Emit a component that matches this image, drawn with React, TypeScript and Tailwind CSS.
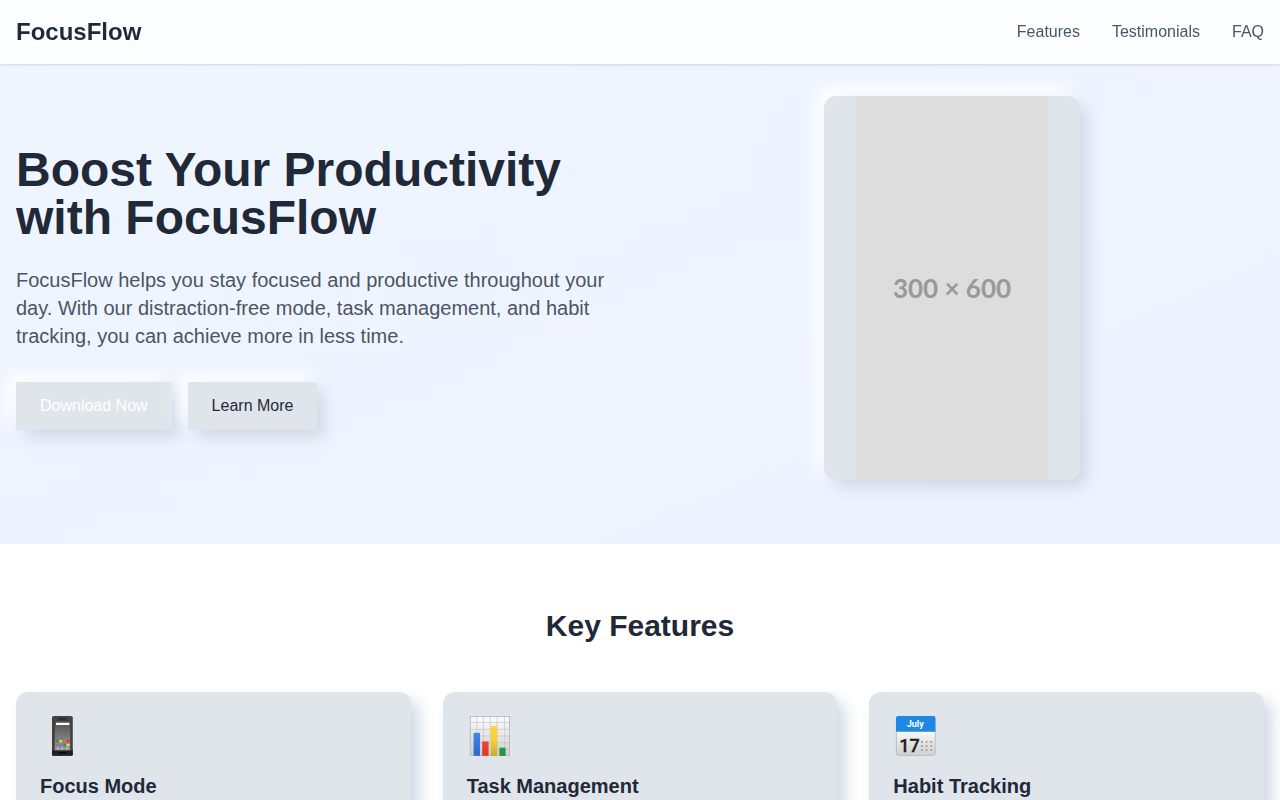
import type { ReactNode } from "react";

const raised = "bg-[#e0e5ec] shadow-[8px_8px_16px_#d1d9e6,-8px_-8px_16px_#ffffff]";

function PhoneIcon() {
  const apps: [number, number, string][] = [
    [16, 24, "#0f9d58"],
    [19.4, 24, "#fdd835"],
    [23.2, 24, "#ff6d00"],
    [26.8, 24, "#e53935"],
    [16, 27.8, "#ef5350"],
    [19.4, 27.8, "#4285f4"],
    [23.2, 27.8, "#0f9d58"],
    [26.8, 27.8, "#fdd835"],
  ];
  return (
    <svg viewBox="0 0 45 40" className="h-10 w-[45px]" aria-hidden="true">
      <defs>
        <linearGradient id="phone-screen" x1="0" y1="0" x2="0" y2="1">
          <stop offset="0" stopColor="#505050" />
          <stop offset="1" stopColor="#9a9a9a" />
        </linearGradient>
      </defs>
      <rect x="12" y="0" width="20.8" height="39.8" rx="1.6" fill="#424242" />
      <path d="M12 34.3h20.8v3.9a1.6 1.6 0 0 1-1.6 1.6H13.6a1.6 1.6 0 0 1-1.6-1.6z" fill="#212121" />
      <rect x="14.3" y="4.7" width="16.3" height="29.8" fill="url(#phone-screen)" stroke="#303030" strokeWidth=".5" />
      <rect x="18.6" y="2" width="7.8" height="1.6" rx=".8" fill="#262626" />
      <rect x="16" y="6.8" width="13.4" height="2.2" fill="#fff" />
      {apps.map(([x, y, fill]) => (
        <rect key={`${x}-${y}`} x={x} y={y} width="2.6" height="2.4" rx=".4" fill={fill} />
      ))}
      <path d="M17.2 31.6h1.6v2h-1.6zM21.6 31.6h1.6v2h-1.6zM26.4 31.6H28v2h-1.6z" fill="#c4c4c4" />
      <rect x="18.6" y="35.9" width="7.8" height="1.4" rx=".7" fill="#050505" />
    </svg>
  );
}

function ChartIcon() {
  return (
    <svg viewBox="0 0 45 40" className="h-10 w-[45px]" aria-hidden="true">
      <defs>
        <linearGradient id="chart-paper" x1="0" y1="0" x2="0" y2="1">
          <stop offset="0" stopColor="#fcfcfc" />
          <stop offset="1" stopColor="#d0d0d0" />
        </linearGradient>
        <linearGradient id="chart-blue" x1="0" y1="0" x2="0" y2="1">
          <stop offset="0" stopColor="#4285f4" />
          <stop offset="1" stopColor="#3566c4" />
        </linearGradient>
        <linearGradient id="chart-red" x1="0" y1="0" x2="0" y2="1">
          <stop offset="0" stopColor="#f44336" />
          <stop offset="1" stopColor="#d5392d" />
        </linearGradient>
        <linearGradient id="chart-yellow" x1="0" y1="0" x2="0" y2="1">
          <stop offset="0" stopColor="#fdd835" />
          <stop offset=".5" stopColor="#f5d033" />
          <stop offset="1" stopColor="#c9ab28" />
        </linearGradient>
        <linearGradient id="chart-green" x1="0" y1="0" x2="0" y2="1">
          <stop offset="0" stopColor="#1fa34f" />
          <stop offset="1" stopColor="#248c43" />
        </linearGradient>
      </defs>
      <rect x="3.2" y=".4" width="39.4" height="39.2" fill="url(#chart-paper)" />
      <path
        d="M9.8 .5v39M16.4 .5v39M23.2 .5v39M30 .5v39M37.6 .5v39M3.2 6.5h39.4M3.2 13.4h39.4M3.2 20h39.4M3.2 26.7h39.4M3.2 33.4h39.4"
        fill="none"
        stroke="#bdbdbd"
        strokeWidth=".6"
      />
      <rect x="3.3" y=".5" width="39.2" height="39" fill="none" stroke="#bdbdbd" strokeWidth="1" />
      <rect x="6.6" y="16.8" width="6.4" height="23" fill="url(#chart-blue)" />
      <rect x="15.2" y="25.4" width="6.4" height="14.4" fill="url(#chart-red)" />
      <rect x="23.9" y="10" width="6.2" height="29.8" fill="url(#chart-yellow)" />
      <rect x="32.4" y="31.6" width="6.2" height="8.2" fill="url(#chart-green)" />
    </svg>
  );
}

function CalendarIcon() {
  const columns = [28, 32.6, 37.2];
  const rows = [25, 29.1, 33.2];
  return (
    <svg viewBox="0 0 45 40" className="h-10 w-[45px]" aria-hidden="true">
      <defs>
        <linearGradient id="calendar-page" x1="0" y1="0" x2="0" y2="1">
          <stop offset=".4" stopColor="#f7f7f7" />
          <stop offset="1" stopColor="#cfcfcf" />
        </linearGradient>
      </defs>
      <rect x="3.4" y=".4" width="38.8" height="39.2" rx="2.4" fill="url(#calendar-page)" stroke="#b4b4b4" strokeWidth=".8" />
      <path d="M3 15.8V2a2 2 0 0 1 2-2h35.4a2 2 0 0 1 2 2v13.8z" fill="#1e88e5" />
      <text x="22.2" y="11" textAnchor="middle" fontFamily="Roboto, sans-serif" fontSize="9" fontWeight="700" fill="#fff">
        July
      </text>
      <text x="16.4" y="35.8" textAnchor="middle" fontFamily="Roboto, sans-serif" fontSize="18" fontWeight="500" fill="#212121" stroke="#212121" strokeWidth=".3">
        17
      </text>
      {rows.map((y) => columns.map((x) => <rect key={`${x}-${y}`} x={x} y={y} width="2" height="1.8" fill="#a6a6a6" />))}
    </svg>
  );
}

const features: { icon: ReactNode; title: string }[] = [
  { icon: <PhoneIcon />, title: "Focus Mode" },
  { icon: <ChartIcon />, title: "Task Management" },
  { icon: <CalendarIcon />, title: "Habit Tracking" },
];

export default function App() {
  return (
    <div className="bg-white font-['Liberation_Sans',sans-serif] text-[#1f2937]">
      <header className="sticky top-0 z-10 -mb-16 bg-white/80 shadow-sm backdrop-blur-md">
        <nav className="flex items-center justify-between p-4">
          <a href="#" className="text-2xl font-bold">
            FocusFlow
          </a>
          <div className="flex gap-8 text-[#4b5563]">
            <a href="#features">Features</a>
            <a href="#testimonials">Testimonials</a>
            <a href="#faq">FAQ</a>
          </div>
        </nav>
      </header>
      <main>
        <section className="grid items-center bg-linear-to-br/srgb from-[#eff6ff] to-[#eef2ff] px-4 pt-24 pb-16 md:grid-cols-2">
          <div>
            <h1 className="mb-6 text-5xl leading-none font-bold">Boost Your Productivity with FocusFlow</h1>
            <p className="mb-8 text-xl text-[#4b5563]">
              FocusFlow helps you stay focused and productive throughout your day. With our distraction-free mode, task
              management, and habit tracking, you can achieve more in less time.
            </p>
            <div className="flex gap-4">
              <button type="button" className={`px-6 py-3 text-white ${raised}`}>
                Download Now
              </button>
              <button type="button" className={`px-6 py-3 ${raised}`}>
                Learn More
              </button>
            </div>
          </div>
          <div className={`flex h-96 w-64 justify-center justify-self-center rounded-xl ${raised}`}>
            <div className="flex w-48 items-center justify-center bg-[#dddddd] font-['Lato',sans-serif] text-[26px] font-bold text-[#999999]">
              300 × 600
            </div>
          </div>
        </section>
        <section id="features" className="px-4 py-16">
          <h2 className="mb-12 text-center text-3xl font-bold">Key Features</h2>
          <div className="grid gap-8 md:grid-cols-3">
            {features.map((feature) => (
              <article key={feature.title} className={`rounded-xl p-6 ${raised}`}>
                <div className="mb-4">{feature.icon}</div>
                <h3 className="text-xl font-bold">{feature.title}</h3>
              </article>
            ))}
          </div>
        </section>
      </main>
    </div>
  );
}
